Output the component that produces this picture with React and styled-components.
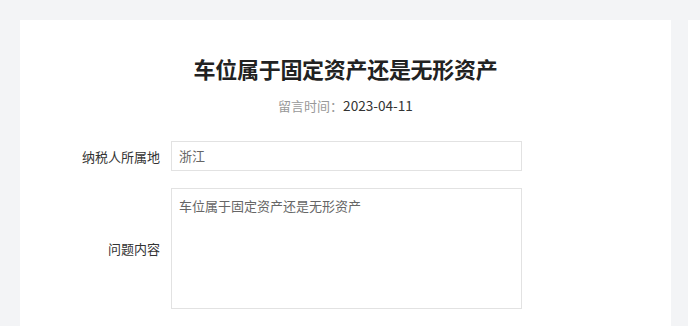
import React from "react";
import styled, { createGlobalStyle } from "styled-components";

const GlobalStyles = createGlobalStyle`
  html, body {
    margin: 0;
    padding: 0;
    background: #f3f4f6;
    font-family: "Microsoft YaHei", "Noto Sans CJK SC", "Noto Sans", sans-serif;
    overflow: hidden;
  }
`;

const Page = styled.div`
  display: flex;
  gap: 17px;
  padding: 20px 0 0 20px;
  height: 306px;
  overflow: hidden;
`;

const Card = styled.div`
  width: 651px;
  flex-shrink: 0;
  background: #ffffff;
  padding-top: 33px;
  box-sizing: border-box;
`;

const SideCard = styled.div`
  flex: 1;
  background: #ffffff;
`;

const Title = styled.h1`
  margin: 0;
  text-align: center;
  font-size: 22px;
  line-height: 30px;
  font-weight: 700;
  color: #222;
  letter-spacing: -0.3px;
`;

const Meta = styled.div`
  margin-top: 12px;
  text-align: center;
  font-size: 13px;
  line-height: 20px;
  color: #999;

  span {
    color: #333;
    font-size: 13.6px;
  }
`;

const Form = styled.div`
  margin-top: 25px;
  display: grid;
  grid-template-columns: 140px 351px;
  column-gap: 11px;
  row-gap: 17px;
  align-items: center;
`;

const Label = styled.label`
  text-align: right;
  font-size: 13px;
  color: #333;
`;

const Field = styled.div`
  box-sizing: border-box;
  height: ${(p) => p.$h}px;
  border: 1px solid #e2e2e2;
  padding: ${(p) => (p.$multi ? "7px 7px" : "0 7px")};
  display: flex;
  align-items: ${(p) => (p.$multi ? "flex-start" : "center")};
  font-size: 13px;
  line-height: 20px;
  color: #666;
`;

export default function App() {
  return (
    <>
      <GlobalStyles />
      <Page>
        <Card>
          <Title>车位属于固定资产还是无形资产</Title>
          <Meta>
            留言时间：<span>2023-04-11</span>
          </Meta>
          <Form>
            <Label>纳税人所属地</Label>
            <Field $h={30}>浙江</Field>
            <Label>问题内容</Label>
            <Field $h={121} $multi>
              车位属于固定资产还是无形资产
            </Field>
          </Form>
        </Card>
        <SideCard />
      </Page>
    </>
  );
}
